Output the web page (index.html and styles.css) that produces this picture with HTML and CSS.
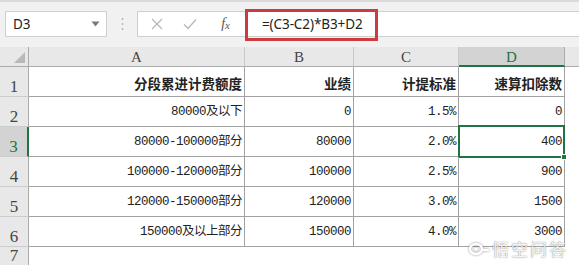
FILE: index.html
```html
<!DOCTYPE html>
<html lang="zh-CN">
<head>
<meta charset="utf-8">
<title>分段累进计费</title>
<link rel="stylesheet" href="styles.css">
</head>
<body>
<div class="app">
  <div class="formula-bar">
    <div class="name-box">
      <span class="name-text">D3</span>
      <svg class="drop" width="9" height="6" viewBox="0 0 9 6"><path d="M0.5 0.5h8L4.5 5.5z" fill="#7a7a7a"/></svg>
    </div>
    <div class="grip">
      <svg width="3" height="14" viewBox="0 0 3 14"><circle cx="1.5" cy="2" r="1" fill="#b4b4b4"/><circle cx="1.5" cy="7" r="1" fill="#b4b4b4"/><circle cx="1.5" cy="12" r="1" fill="#b4b4b4"/></svg>
    </div>
    <div class="fx-buttons">
      <span class="btn btn-cancel"><svg width="12" height="12" viewBox="0 0 12 12"><path d="M1 1L11 11M11 1L1 11" stroke="#b9b9b9" stroke-width="1.3" fill="none"/></svg></span>
      <span class="btn btn-enter"><svg width="14" height="12" viewBox="0 0 14 12"><path d="M1 6.5L5 10.5L13 1.5" stroke="#b9b9b9" stroke-width="1.4" fill="none"/></svg></span>
      <span class="btn btn-fx"><i>f</i><i class="x">x</i></span>
    </div>
    <div class="formula-input">
      <span class="formula-text">=(C3-C2)*B3+D2</span>
      <span class="callout"></span>
    </div>
  </div>

  <div class="sheet">
    <div class="corner"><span class="corner-mark"></span></div>
    <div class="hd">A</div>
    <div class="hd">B</div>
    <div class="hd">C</div>
    <div class="hd hd-active">D</div>
    <div class="hd hd-rest"></div>

    <div class="rh">1</div>
    <div class="c title">分段累进计费额度</div>
    <div class="c title">业绩</div>
    <div class="c title">计提标准</div>
    <div class="c title">速算扣除数</div>
    <div class="e"></div>

    <div class="rh">2</div>
    <div class="c">80000及以下</div>
    <div class="c">0</div>
    <div class="c">1.5%</div>
    <div class="c">0</div>
    <div class="e"></div>

    <div class="rh rh-active">3</div>
    <div class="c">80000-100000部分</div>
    <div class="c">80000</div>
    <div class="c">2.0%</div>
    <div class="c selected">400<span class="fill-handle"></span></div>
    <div class="e"></div>

    <div class="rh">4</div>
    <div class="c">100000-120000部分</div>
    <div class="c">100000</div>
    <div class="c">2.5%</div>
    <div class="c">900</div>
    <div class="e"></div>

    <div class="rh">5</div>
    <div class="c">120000-150000部分</div>
    <div class="c">120000</div>
    <div class="c">3.0%</div>
    <div class="c">1500</div>
    <div class="e"></div>

    <div class="rh">6</div>
    <div class="c">150000及以上部分</div>
    <div class="c">150000</div>
    <div class="c">4.0%</div>
    <div class="c">3000</div>
    <div class="e"></div>

    <div class="rh rh-last">7</div>
    <div class="e"></div>
    <div class="e"></div>
    <div class="e"></div>
    <div class="e"></div>
    <div class="e"></div>
  </div>

  <div class="watermark">
    <svg width="22" height="14" viewBox="0 0 22 14"><path d="M2 7a6 5 0 0 1 12 0a6 5 0 0 1 -12 0z" fill="none" stroke="#fff" stroke-width="2.4"/><circle cx="8" cy="7" r="1.6" fill="#fff"/><path d="M14 8h7" stroke="#fff" stroke-width="2.4"/></svg>
    <span>悟空问答</span>
  </div>
</div>
</body>
</html>
```

FILE: styles.css
```css
* {
  box-sizing: border-box;
}

html, body {
  margin: 0;
  padding: 0;
}

body {
  width: 579px;
  height: 265px;
  overflow: hidden;
  background: #ffffff;
  font-family: "Noto Sans", "Noto Sans CJK SC", sans-serif;
}

.app {
  position: relative;
  width: 579px;
  height: 265px;
  display: flex;
  flex-direction: column;
}

/* ---------- formula bar ---------- */
.formula-bar {
  height: 47px;
  flex: none;
  display: flex;
  align-items: flex-start;
  padding: 9px 0 0 5px;
  background: #f1f1f1;
  border-top: 2px solid #dadada;
}

.name-box {
  width: 102px;
  height: 26px;
  background: #fff;
  border: 1px solid #cfcfcf;
  display: flex;
  align-items: center;
  justify-content: space-between;
  padding: 0 6px 0 7px;
}

.name-text {
  font-family: "Noto Sans", sans-serif;
  font-size: 13.5px;
  color: #222;
}

.grip {
  width: 30px;
  height: 26px;
  display: flex;
  align-items: center;
  justify-content: center;
}

.fx-buttons {
  width: 108px;
  height: 26px;
  background: #fff;
  border: 1px solid #cfcfcf;
  border-right: none;
  display: flex;
  align-items: center;
  padding-left: 2px;
}

.btn {
  height: 24px;
  display: flex;
  align-items: center;
  justify-content: center;
}

.btn-cancel { width: 35px; }
.btn-enter { width: 33px; }
.btn-fx {
  width: 40px;
  font-family: "Liberation Serif", serif;
  font-size: 14px;
  color: #555;
}

.btn-fx i {
  font-style: italic;
}

.btn-fx .x {
  font-size: 11px;
  margin-top: 2px;
}

.formula-input {
  position: relative;
  flex: 1;
  height: 26px;
  background: #fff;
  border: 1px solid #cfcfcf;
  border-right: none;
  display: flex;
  align-items: center;
  padding-left: 16px;
}

.formula-text {
  font-family: "Noto Sans", sans-serif;
  font-size: 13.5px;
  color: #222;
  letter-spacing: -0.1px;
}

/* red annotation frame around the formula */
.callout {
  position: absolute;
  left: -1px;
  top: -3px;
  width: 133px;
  height: 32px;
  border: 3px solid #cc3b40;
}

/* ---------- worksheet grid ---------- */
.sheet {
  flex: 1;
  display: grid;
  grid-template-columns: 29px 216px 109px 105px 106px 1fr;
  grid-template-rows: 20px repeat(6, 30px) 1fr;
  background: #fff;
}

.corner {
  position: relative;
  background: #e8e8e8;
  border-right: 1px solid #ababab;
  border-bottom: 1px solid #ababab;
}

.corner-mark {
  position: absolute;
  right: 3px;
  bottom: 3px;
  width: 11px;
  height: 11px;
  background: #b9b9b9;
  clip-path: polygon(100% 0, 100% 100%, 0 100%);
}

.hd {
  background: #e8e8e8;
  border-right: 1px solid #c9c9c9;
  border-bottom: 1px solid #ababab;
  font-family: "Liberation Serif", serif;
  font-size: 15px;
  color: #444;
  text-align: center;
  line-height: 21px;
}

.hd-active {
  background: #d3d3d3;
  color: #217346;
  border-bottom: 2px solid #217346;
  border-right-color: #ababab;
}

.hd-rest {
  border-right: none;
}

.rh {
  background: #e8e8e8;
  border-right: 1px solid #ababab;
  border-bottom: 1px solid #cdcdcd;
  display: flex;
  align-items: flex-end;
  justify-content: center;
  font-family: "Liberation Serif", serif;
  font-size: 17px;
  line-height: 17px;
  color: #444;
  padding-bottom: 1px;
}

.rh-active {
  background: #d3d3d3;
  color: #217346;
  border-right: 2px solid #217346;
}

.rh-last {
  border-bottom: none;
}

.c {
  position: relative;
  border-right: 1px solid #a2a2a2;
  border-bottom: 1px solid #a2a2a2;
  display: flex;
  align-items: flex-end;
  justify-content: flex-end;
  padding: 0 2px 6px 0;
  font-family: "Liberation Mono", "Noto Sans CJK SC", monospace;
  font-size: 12.5px;
  line-height: 15px;
  letter-spacing: -0.5px;
  color: #222;
  white-space: nowrap;
}

.c.title {
  font-family: "Noto Sans CJK SC", sans-serif;
  font-weight: 700;
  font-size: 13.5px;
  letter-spacing: 0;
  padding-bottom: 5px;
}

.e {
  background: #fff;
}

/* active cell frame and fill handle */
.selected::after {
  content: "";
  position: absolute;
  left: -1px;
  top: -2px;
  right: -1px;
  bottom: -2px;
  border: 2px solid #217346;
  pointer-events: none;
}

.fill-handle {
  position: absolute;
  right: -3px;
  bottom: -4px;
  width: 6px;
  height: 6px;
  background: #217346;
  border: 1px solid #fff;
  z-index: 2;
}

/* site watermark over the lower right corner */
.watermark {
  position: absolute;
  right: 11px;
  bottom: 9px;
  display: flex;
  align-items: center;
  gap: 2px;
  font-family: "Noto Sans CJK SC", sans-serif;
  font-size: 17px;
  line-height: 15px;
  color: rgba(255, 255, 255, 0.92);
  text-shadow: 0 0 1px rgba(0, 0, 0, 0.45), 0 0 2px rgba(0, 0, 0, 0.2);
  letter-spacing: 2px;
}

.watermark svg {
  filter: drop-shadow(0 0 1px rgba(0, 0, 0, 0.45));
}
```
